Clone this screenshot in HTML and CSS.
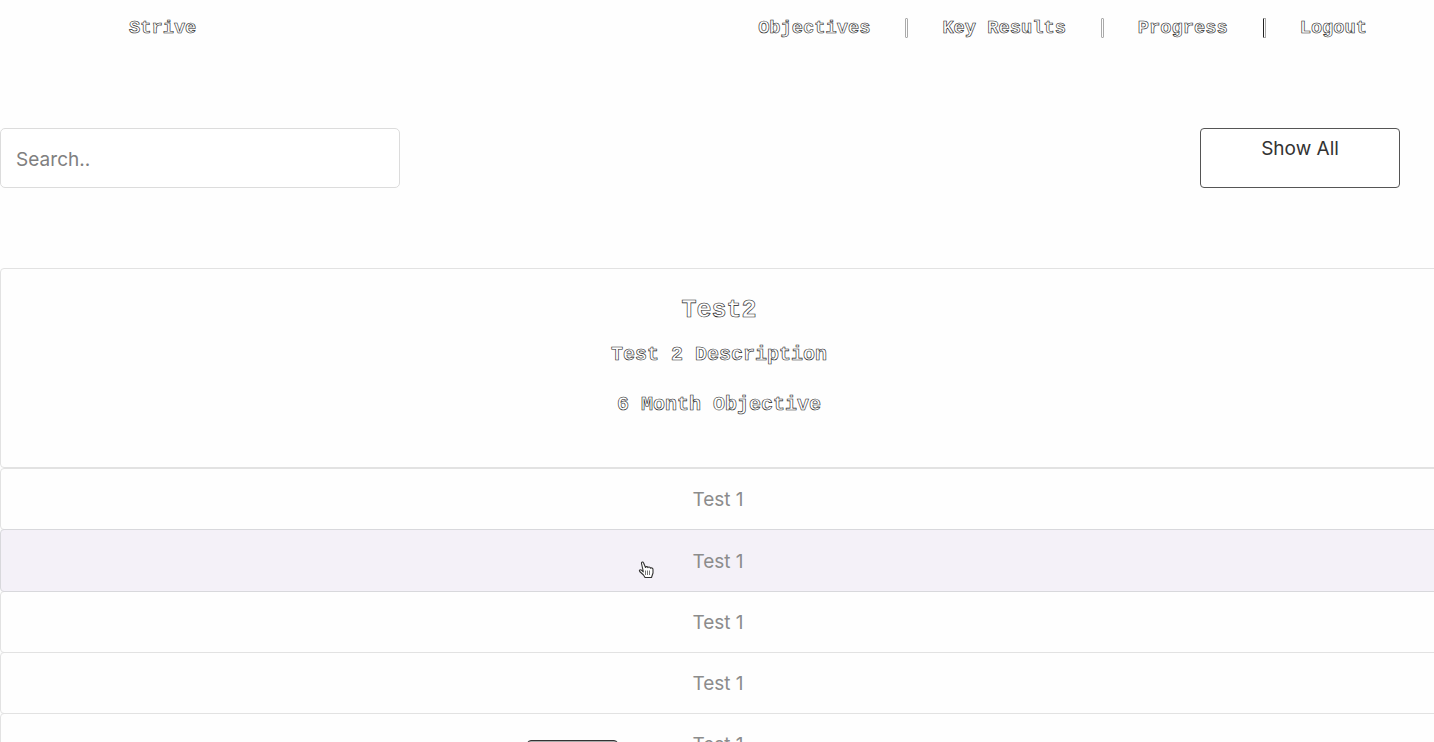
FILE: index.html
```html
<!DOCTYPE html>
<html lang="en">
<head>
<meta charset="utf-8">
<title>Strive</title>
<link rel="stylesheet" href="styles.css">
</head>
<body>
<header class="nav outlined">
  <a class="brand">Strive</a>
  <nav class="links">
    <a>Objectives</a><i class="bar"></i><a>Key Results</a><i class="bar"></i><a>Progress</a><i class="bar dark"></i><a>Logout</a>
  </nav>
</header>
<main>
  <div class="tools">
    <input class="search" type="text" placeholder="Search..">
    <button class="show">Show All</button>
  </div>
  <section class="card outlined">
    <h2>Test2</h2>
    <p>Test 2 Description</p>
    <p>6 Month Objective</p>
  </section>
  <div class="row">Test 1</div>
  <div class="row active">Test 1
    <svg class="cursor" width="18" height="20" viewBox="0 0 18 20"><path d="M5.2 11 3.5 3.5C3.2 2 5 1.4 5.5 2.8L7.5 7.5C7.5 6.3 9.5 6.2 9.9 7.6 10.3 6.7 12 6.8 12.5 8.2 13.3 7.5 15 8 15 9.5V13L13.5 17.5H7L5.5 15 1.7 11.5C.8 10.3 2.2 9.2 3.5 10.2L5.2 11.8Z" fill="#fff" stroke="#333" stroke-width="1.1" stroke-linejoin="round"/><path d="M7.5 10.5V15M9.5 10.5V15M11.5 10.5V15" stroke="#777" stroke-width="1"/></svg>
  </div>
  <div class="row">Test 1</div>
  <div class="row">Test 1</div>
  <div class="row">Test 1</div>
</main>
<div class="popup"></div>
</body>
</html>
```
FILE: styles.css
```css
* { box-sizing: border-box; }
body {
  margin: 0;
  height: 742px;
  overflow: hidden;
  position: relative;
  background: #fefefe;
  font-family: Inter, "Liberation Sans", sans-serif;
  font-size: 19px;
}
.outlined {
  font-family: "Courier New", "Liberation Mono", monospace;
  font-weight: bold;
  color: #fff;
  -webkit-text-stroke: 0.6px #222;
}
.nav {
  height: 128px;
  padding: 17px 67px 0 129px;
  display: flex;
  justify-content: space-between;
  align-items: flex-start;
  font-size: 18.72px;
  line-height: 23px;
}
.links { display: flex; }
.bar {
  width: 3px;
  height: 20px;
  margin: 1px 34px 0 35px;
  border: 1px solid #aaa;
  border-radius: 1px;
}
.bar.dark { border-left-color: #222; }
.tools {
  display: flex;
  justify-content: space-between;
  height: 140px;
  padding-right: 34px;
}
.search {
  width: 400px;
  height: 60px;
  padding: 3px 15px 0;
  border: 1px solid #dcdcdc;
  border-radius: 5px;
  background: #fff;
  font: inherit;
  letter-spacing: 0.05px;
}
.search::placeholder { color: #808080; }
.show {
  width: 200px;
  height: 60px;
  padding: 0 0 20px;
  border: 1px solid #555;
  border-radius: 4px;
  background: #fff;
  color: #333;
  font: inherit;
}
.card, .row {
  width: 1438px;
  border: 1px solid #e2e2e2;
  border-radius: 4px;
  text-align: center;
}
.card {
  height: 200px;
  padding-top: 26px;
  font-size: 20px;
}
.card h2 {
  margin: 0;
  font-size: 25px;
  line-height: 32px;
}
.card p { margin: 16px 0 26px; line-height: 24px; }
.row {
  position: relative;
  height: 62px;
  margin-bottom: -1px;
  padding-right: 2px;
  line-height: 61px;
  color: #8c8c8c;
}
.row.active {
  height: 63px;
  line-height: 63px;
  background: #f4f1f8;
  border-color: #d8d8dc;
  z-index: 1;
}
.cursor { position: absolute; left: 637px; top: 30px; }
.popup {
  position: absolute;
  left: 527px;
  top: 740px;
  width: 91px;
  height: 20px;
  border: 1px solid #333;
  border-radius: 4px;
  background: #aaa;
}
```
